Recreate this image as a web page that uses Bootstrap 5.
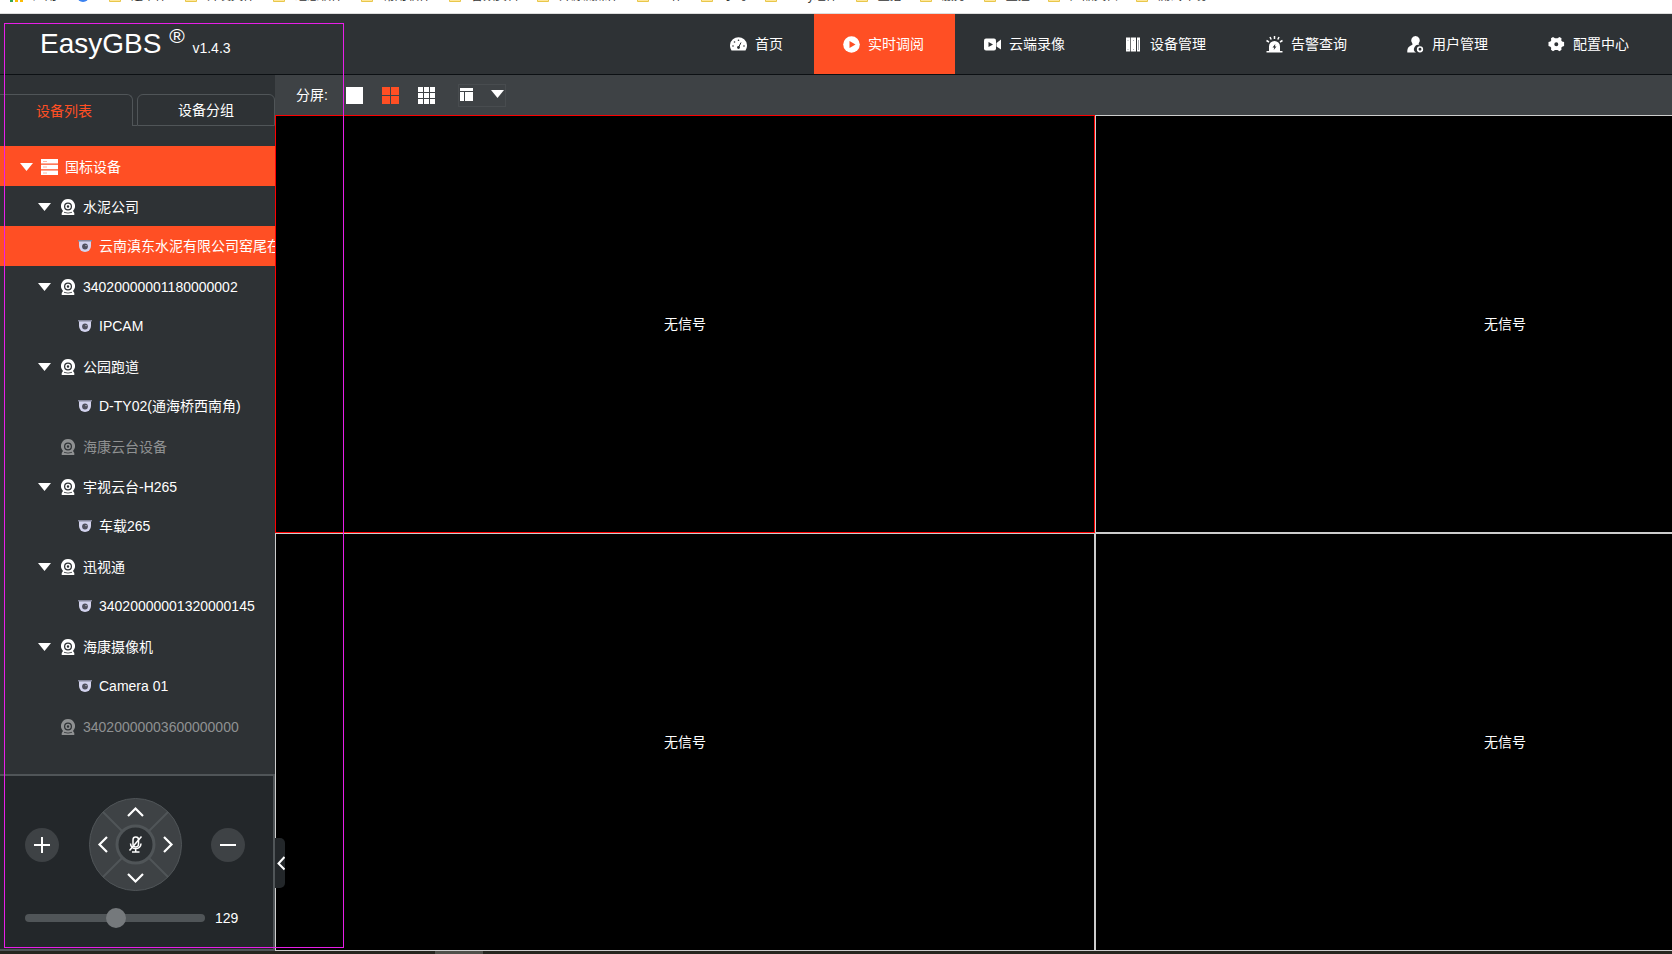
<!DOCTYPE html>
<html lang="zh-CN">
<head>
<meta charset="utf-8">
<meta name="viewport" content="width=device-width, initial-scale=1">
<title>EasyGBS</title>
<link href="https://cdn.jsdelivr.net/npm/bootstrap@5.3.0/dist/css/bootstrap.min.css" rel="stylesheet">
<style>
:root{--accent:#ff4f24;--panel:#2e3235;--bar:#3e4245;--deep:#23272a;--edge:#505558}
body{font-family:"Liberation Sans","Noto Sans CJK SC",sans-serif;font-size:14px;line-height:20px;color:#fff;background:var(--panel)}
a{color:inherit;text-decoration:none}
button{color:inherit;background:none;border:0;padding:0}
svg{display:block;flex:none}
/* bookmarks strip */
.marks{height:14px;background:#fff;border-bottom:1px solid #ddd;font-size:12px;line-height:16px;color:#333;padding:0 0 9px 10px}
.marks a{gap:10px;margin-right:18px;height:16px}
.marks .app-link{margin-right:20px}
.marks .site-link{margin-right:20px}
/* header */
.topbar{height:61px;border-bottom:1px solid #0c1013}
.logo{font-size:28px;line-height:40px;padding:4px 0 0 40px}
.logo sup{font-size:21px}
.logo .ver{font-size:14px}
.mainnav{padding-right:12px}
.mainnav .nav-link{color:#fff;height:60px;padding:0 31px 0 29px;gap:8px;border-radius:0}
.mainnav .nav-link.active{background:var(--accent)}
/* sidebar */
.side{width:275px;flex:none}
.tabs{padding-top:19px;height:51px}
.tabs .tab-left{width:133px;border:1px solid var(--edge);border-width:1px 1px 0 0;border-radius:0 6px 0 0;color:var(--accent);padding-right:4px}
.tabs .tab-gap{width:4px;border-bottom:1px solid var(--edge)}
.tabs .tab-right{border:1px solid var(--edge);border-radius:6px 6px 0 0}
.tree{padding-top:20px;margin:0}
.tree a{height:40px;white-space:nowrap;overflow:hidden;display:flex;align-items:center}
.tree .on{background:var(--accent)}
.tree .off{color:#8f9192}
.tree .lv1{padding:2px 0 0 20px}
.lv1 .caret{margin-right:8px}
.lv1 .ic{margin-right:7px}
.tree .lv2{padding:2px 0 0 38px}
.lv2 .caret{margin-right:10px}
.lv2 .ic{margin-right:8px}
.tree .lv2.off{padding-left:61px}
.lv3{padding-left:78px}
.lv3 .ic{margin-right:7px}
/* camera controls */
.ptz{background:var(--deep);border:2px solid var(--edge);border-left:0;padding:22px 28px 21px 25px}
.round{width:34px;height:34px;border-radius:50%;background:var(--bar)}
.zoomrow{gap:10px;margin-top:17px}
.speed{appearance:none;width:180px;height:20px;background:none;margin:0}
.speed::-webkit-slider-runnable-track{height:8px;border-radius:4px;background:var(--edge)}
.speed::-webkit-slider-thumb{appearance:none;width:20px;height:20px;border-radius:50%;background:#75797c;margin-top:-6px}
/* stage */
.stage{min-width:0}
.tools{height:40px;background:var(--bar);padding-left:21px}
.tools .one{margin-left:18px}
.tools .four,.tools .nine{margin-left:19px}
.tools .layout{margin-left:23px;height:23px;width:48px;border:1px solid #484c4f;padding:0 1px 2px}
.wall{display:grid;grid-template-columns:58.7% 58.7%;grid-template-rows:1fr 1fr;overflow:hidden}
.screen{background:#000;border:1px solid #ccc}
.screen.sel{border-color:#f00}
.handle{left:275px;bottom:63px;width:10px;height:50px;background:var(--deep);border-radius:0 5px 5px 0}
.taskbar{height:3px;background:#26261f}
.taskbar span{margin-left:435px;width:48px;background:#50504a}
.frame{left:4px;top:23px;width:340px;bottom:6px;border:1px solid #e81ee8;pointer-events:none}
</style>
</head>
<body class="min-vh-100 d-flex flex-column position-relative overflow-hidden">
<svg width="0" height="0" class="position-absolute" aria-hidden="true">
 <symbol id="down" viewBox="0 0 13 8"><path d="M0 0h13L6.500 8z" fill="#fff"/></symbol>
 <symbol id="folder" viewBox="0 0 12 12"><path d="M.5 1.500h4l1 2h6v8H.5z" fill="#ffe79b" stroke="#e8c74a"/></symbol>
 <symbol id="webcam" viewBox="0 0 14 16"><path fill-rule="evenodd" fill="currentColor" d="M7 0a7 7 0 0 1 5 11.900L13.300 14v2H.7v-2L2 11.900A7 7 0 0 1 7 0zm0 3.500a4 4 0 1 0 0 8 4 4 0 0 0 0-8z"/><circle cx="7" cy="7.500" r="2" fill="none" stroke="currentColor" stroke-width="1.500"/><path d="M3 13.300q4 1.600 8 0" stroke="#2e3235" fill="none" stroke-width=".8"/></symbol>
 <symbol id="dome" viewBox="0 0 14 12"><path d="M1 1h12v5a6 6 0 0 1-12 0z" fill="#d3d3ee"/><path d="M0 0h14v1.500H0z" fill="#85869b"/><circle cx="7" cy="6.500" r="2.900" fill="#50505e"/><circle cx="8" cy="5.600" r=".7" fill="#c9c9dd"/></symbol>
</svg>

<nav class="marks d-flex align-items-end overflow-hidden" aria-label="书签">
 <a href="#" class="app-link d-flex align-items-center"><svg width="13" height="12" viewBox="0 0 13 12"><path d="M0 0h3v3H0zM0 4.500h3v3H0zM0 9h3v3H0z" fill="#34a853"/><path d="M5 0h3v3H5zM5 4.500h3v3H5zM5 9h3v3H5zM10 0h3v3h-3zM10 4.500h3v3h-3zM10 9h3v3h-3z" fill="#fbbc05"/></svg>应用</a>
 <a href="#" class="site-link d-flex align-items-center" aria-label="百度"><svg width="12" height="12"><circle cx="6" cy="6" r="6" fill="#3b82f0"/></svg></a>
 <a href="#" class="d-flex align-items-center"><svg width="12" height="12"><use href="#folder"/></svg>运维件</a>
 <a href="#" class="d-flex align-items-center"><svg width="12" height="12"><use href="#folder"/></svg>开发文件</a>
 <a href="#" class="d-flex align-items-center"><svg width="12" height="12"><use href="#folder"/></svg>组态软件</a>
 <a href="#" class="d-flex align-items-center"><svg width="12" height="12"><use href="#folder"/></svg>常用软件</a>
 <a href="#" class="d-flex align-items-center"><svg width="12" height="12"><use href="#folder"/></svg>音频资料</a>
 <a href="#" class="d-flex align-items-center"><svg width="12" height="12"><use href="#folder"/></svg>开源流媒体</a>
 <a href="#" class="d-flex align-items-center"><svg width="12" height="12"><use href="#folder"/></svg>工作</a>
 <a href="#" class="d-flex align-items-center"><svg width="12" height="12"><use href="#folder"/></svg>学习</a>
 <a href="#" class="d-flex align-items-center"><svg width="12" height="12"><use href="#folder"/></svg>Easy组件</a>
 <a href="#" class="d-flex align-items-center"><svg width="12" height="12"><use href="#folder"/></svg>直播</a>
 <a href="#" class="d-flex align-items-center"><svg width="12" height="12"><use href="#folder"/></svg>服务</a>
 <a href="#" class="d-flex align-items-center"><svg width="12" height="12"><use href="#folder"/></svg>监控</a>
 <a href="#" class="d-flex align-items-center"><svg width="12" height="12"><use href="#folder"/></svg>产品文档</a>
 <a href="#" class="d-flex align-items-center"><svg width="12" height="12"><use href="#folder"/></svg>测试环境</a>
</nav>

<header class="topbar d-flex align-items-center">
 <div class="logo text-nowrap">EasyGBS <sup>®</sup> <span class="ver">v1.4.3</span></div>
 <nav class="mainnav nav flex-nowrap text-nowrap ms-auto">
  <a class="nav-link d-flex align-items-center" href="#"><svg width="17" height="17" viewBox="0 0 17 17"><path d="M1.500 14.500a8.500 8.500 0 1 1 14 0z" fill="#fff"/><g fill="#2e3235"><circle cx="3" cy="10" r=".8"/><circle cx="4.500" cy="6" r=".8"/><circle cx="8.500" cy="4.300" r=".8"/><circle cx="14" cy="10" r=".8"/><circle cx="8.500" cy="11.500" r="1.400"/></g><path d="M8.500 11.500l2.500-5" stroke="#2e3235"/></svg>首页</a>
  <a class="nav-link active d-flex align-items-center" aria-current="page" href="#"><svg width="17" height="17"><circle cx="8.500" cy="8.500" r="8.300" fill="#fff"/><path d="M6.500 5l6 3.500-6 3.500z" fill="#ff4f24"/></svg>实时调阅</a>
  <a class="nav-link d-flex align-items-center" href="#"><svg width="17" height="17"><rect y="2.500" width="12" height="12" rx="2" fill="#fff"/><path d="M12.500 7L17 3.500v10l-4.500-3z" fill="#fff"/><path d="M4.500 6l4.500 2.500L4.500 11z" fill="#2e3235"/></svg>云端录像</a>
  <a class="nav-link d-flex align-items-center" href="#"><svg width="17" height="17"><path d="M1 1.500h4.300v14H1zM6 1.500h5v14H6zM12 1.500h3v14h-3z" fill="#fff"/><path d="M3 4v1M8.500 4v1M3 13v1M8.500 13v1M13.500 4v10" stroke="#a6abb2"/></svg>设备管理</a>
  <a class="nav-link d-flex align-items-center" href="#"><svg width="17" height="17"><path d="M3 15v-4.500a5.500 5.500 0 0 1 11 0V15h2.500v1.500H.5V15z" fill="#fff"/><path d="M8.500 0v3M4 1l1.200 2.500M13 1l-1.200 2.500M.5 4.500L3 6M16.500 4.500L14 6" stroke="#fff" stroke-width="1.500"/><path d="M9.300 8L6.500 11.500h1.700L7.700 14 10.500 10.500H9z" fill="#2e3235"/></svg>告警查询</a>
  <a class="nav-link d-flex align-items-center" href="#"><svg width="17" height="17"><path d="M8.500 0a4.500 4.500 0 0 1 3.200 7.500c-.5 1 .5 1.500 1.500 2A4 4 0 0 0 9 16.500H.3c0-4 .7-5.500 3.700-7 1.500-.7 2-1 1.300-2A4.500 4.500 0 0 1 8.500 0z" fill="#fff"/><circle cx="13" cy="13.300" r="2.300" fill="none" stroke="#fff" stroke-width="1.700"/></svg>用户管理</a>
  <a class="nav-link d-flex align-items-center" href="#"><svg width="17" height="17"><path fill="#fff" fill-rule="evenodd" d="M5 1l2 1.300h2.500L11.500 1l2 1.300-.2 2.200.8 1 2 .5v4l-2 .8-.8 1 .2 2-2 1.500-2-1.300H7L5 15.300l-2-1.500.2-2-.8-1-1.900-.8V6l1.900-.5.8-1L3 2.300zm3.300 5.200a2 2 0 1 0 0 4 2 2 0 0 0 0-4z"/></svg>配置中心</a>
 </nav>
</header>

<main class="d-flex flex-grow-1 position-relative">
 <aside class="side d-flex flex-column">
  <div class="tabs d-flex" role="tablist">
   <button class="tab-left" role="tab" aria-selected="true">设备列表</button>
   <span class="tab-gap"></span>
   <button class="tab-right flex-grow-1" role="tab" aria-selected="false">设备分组</button>
  </div>
  <ul class="tree list-unstyled">
   <li><a href="#" class="lv1 on"><svg class="caret" width="13" height="8"><use href="#down"/></svg><svg class="ic" width="17" height="16"><path d="M0 0h17v4.500H0zM0 5.800h17v4.500H0zM0 11.500h17V16H0z" fill="#fff"/><path d="M2 2.500h4M2 8h4M2 14h4" stroke="#ffb5a0"/></svg>国标设备</a></li>
   <li><a href="#" class="lv2"><svg class="caret" width="13" height="8"><use href="#down"/></svg><svg class="ic" width="14" height="16"><use href="#webcam"/></svg>水泥公司</a></li>
   <li><a href="#" class="lv3 on"><svg class="ic" width="14" height="12"><use href="#dome"/></svg>云南滇东水泥有限公司窑尾在</a></li>
   <li><a href="#" class="lv2"><svg class="caret" width="13" height="8"><use href="#down"/></svg><svg class="ic" width="14" height="16"><use href="#webcam"/></svg>34020000001180000002</a></li>
   <li><a href="#" class="lv3"><svg class="ic" width="14" height="12"><use href="#dome"/></svg>IPCAM</a></li>
   <li><a href="#" class="lv2"><svg class="caret" width="13" height="8"><use href="#down"/></svg><svg class="ic" width="14" height="16"><use href="#webcam"/></svg>公园跑道</a></li>
   <li><a href="#" class="lv3"><svg class="ic" width="14" height="12"><use href="#dome"/></svg>D-TY02(通海桥西南角)</a></li>
   <li><a href="#" class="lv2 off"><svg class="ic" width="14" height="16"><use href="#webcam"/></svg>海康云台设备</a></li>
   <li><a href="#" class="lv2"><svg class="caret" width="13" height="8"><use href="#down"/></svg><svg class="ic" width="14" height="16"><use href="#webcam"/></svg>宇视云台-H265</a></li>
   <li><a href="#" class="lv3"><svg class="ic" width="14" height="12"><use href="#dome"/></svg>车载265</a></li>
   <li><a href="#" class="lv2"><svg class="caret" width="13" height="8"><use href="#down"/></svg><svg class="ic" width="14" height="16"><use href="#webcam"/></svg>迅视通</a></li>
   <li><a href="#" class="lv3"><svg class="ic" width="14" height="12"><use href="#dome"/></svg>34020000001320000145</a></li>
   <li><a href="#" class="lv2"><svg class="caret" width="13" height="8"><use href="#down"/></svg><svg class="ic" width="14" height="16"><use href="#webcam"/></svg>海康摄像机</a></li>
   <li><a href="#" class="lv3"><svg class="ic" width="14" height="12"><use href="#dome"/></svg>Camera 01</a></li>
   <li><a href="#" class="lv2 off"><svg class="ic" width="14" height="16"><use href="#webcam"/></svg>34020000003600000000</a></li>
  </ul>
  <section class="ptz mt-auto">
   <div class="d-flex align-items-center justify-content-between">
    <button class="round" aria-label="放大"><svg width="34" height="34"><path d="M9 17h16M17 9v16" stroke="#fff" stroke-width="2"/></svg></button>
    <svg width="93" height="93" viewBox="0 0 93 93" role="img" aria-label="云台方向">
     <circle cx="46.500" cy="46.500" r="46" fill="#3e4245" stroke="#505558"/>
     <path d="M14 14l65 65M79 14L14 79" stroke="#505558" stroke-width="2"/>
     <circle cx="46.500" cy="46.500" r="18.500" fill="#2b2f32" stroke="#505558" stroke-width="3"/>
     <g fill="none" stroke="#fff" stroke-width="2.200"><path d="M39 18l7.500-7.500L54 18M39 76l7.500 7.500L54 76M18 39l-7.500 7.500L18 54M75 39l7.500 7.500L75 54"/></g>
     <g fill="none" stroke="#fff" stroke-width="1.500"><rect x="44" y="39" width="5.500" height="10" rx="2.700"/><path d="M41.500 45.500a5 5 0 0 0 10.500 0M46.700 51v3M43 54h7.500M52.500 38.500L40.500 52.500"/></g>
    </svg>
    <button class="round" aria-label="缩小"><svg width="34" height="34"><path d="M9 17h16" stroke="#fff" stroke-width="2"/></svg></button>
   </div>
   <div class="zoomrow d-flex align-items-center">
    <input class="speed" id="speed" type="range" min="1" max="255" value="129" aria-label="云台速度"><output for="speed">129</output>
   </div>
  </section>
 </aside>

 <section class="stage flex-grow-1 d-flex flex-column">
  <div class="tools d-flex align-items-center">
   <span>分屏:</span>
   <button class="one" aria-label="单屏"><svg width="17" height="17"><path d="M0 0h17v17H0z" fill="#fff"/></svg></button>
   <button class="four" aria-label="四分屏"><svg width="17" height="17"><path d="M0 0h8v8H0zM9 0h8v8H9zM0 9h8v8H0zM9 9h8v8H9z" fill="#ff4f24"/></svg></button>
   <button class="nine" aria-label="九分屏"><svg width="17" height="17"><path d="M0 0h5v5H0zM6 0h5v5H6zM12 0h5v5h-5zM0 6h5v5H0zM6 6h5v5H6zM12 6h5v5h-5zM0 12h5v5H0zM6 12h5v5H6zM12 12h5v5h-5z" fill="#fff"/></svg></button>
   <button class="layout d-flex align-items-center justify-content-between" aria-label="更多布局"><svg width="13" height="13"><path d="M0 0h13v3H0zM0 4h4v9H0zM5 4h8v9H5z" fill="#fff"/></svg><svg width="13" height="8"><use href="#down"/></svg></button>
  </div>
  <div class="wall flex-grow-1">
   <div class="screen sel d-flex align-items-center justify-content-center">无信号</div>
   <div class="screen d-flex align-items-center justify-content-center">无信号</div>
   <div class="screen d-flex align-items-center justify-content-center">无信号</div>
   <div class="screen d-flex align-items-center justify-content-center">无信号</div>
  </div>
 </section>
 <button class="handle position-absolute" aria-label="收起侧栏"><svg width="10" height="50"><path d="M9.500 19l-6 6.500 6 6" fill="none" stroke="#fff" stroke-width="2"/></svg></button>
</main>
<footer class="taskbar d-flex"><span></span></footer>
<div class="frame position-absolute"></div>
<script src="https://cdn.jsdelivr.net/npm/bootstrap@5.3.0/dist/js/bootstrap.bundle.min.js"></script>
</body>
</html>
